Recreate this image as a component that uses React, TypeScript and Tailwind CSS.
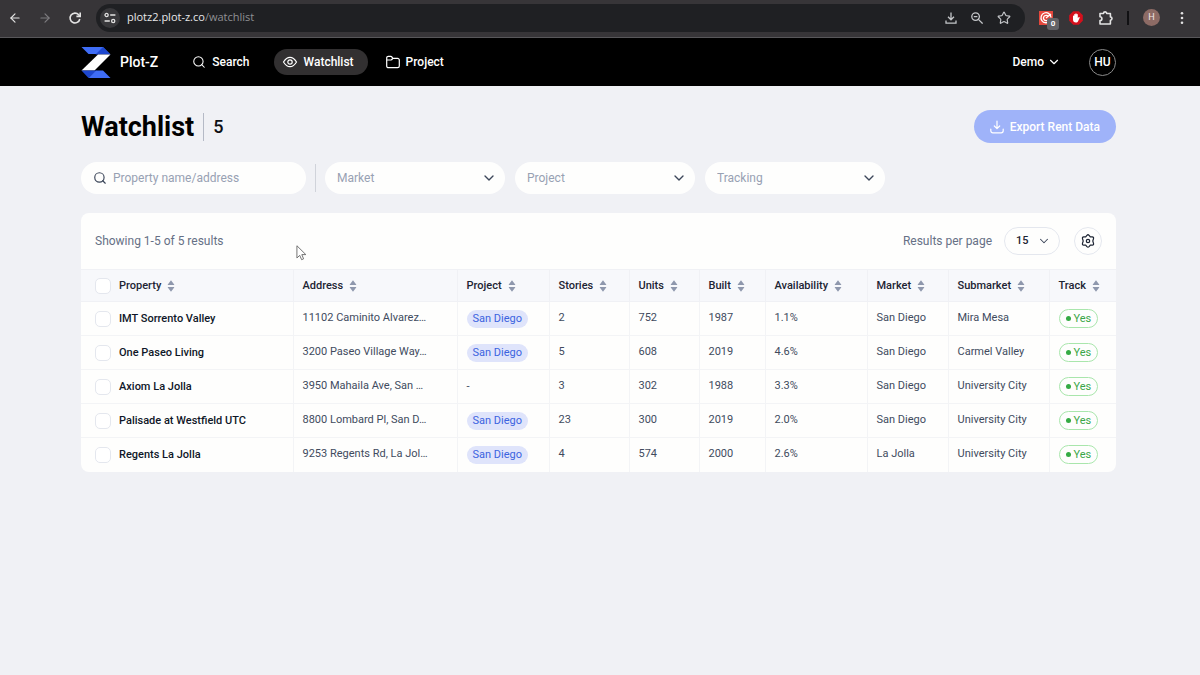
import React from 'react';
import { ArrowLeft, ArrowRight, ChevronDown, Search, Star } from 'lucide-react';

const columns = [
    { label: 'Property', width: '' },
    { label: 'Address', width: 'w-[164px]' },
    { label: 'Project', width: 'w-[92px]' },
    { label: 'Stories', width: 'w-[80px]' },
    { label: 'Units', width: 'w-[70px]' },
    { label: 'Built', width: 'w-[66px]' },
    { label: 'Availability', width: 'w-[102px]' },
    { label: 'Market', width: 'w-[81px]' },
    { label: 'Submarket', width: 'w-[101px]' },
    { label: 'Track', width: 'w-[67px]' },
];

const rows = [
    { name: 'IMT Sorrento Valley', address: '11102 Caminito Alvarez…', project: 'San Diego', stories: '2', units: '752', built: '1987', availability: '1.1%', market: 'San Diego', submarket: 'Mira Mesa' },
    { name: 'One Paseo Living', address: '3200 Paseo Village Way…', project: 'San Diego', stories: '5', units: '608', built: '2019', availability: '4.6%', market: 'San Diego', submarket: 'Carmel Valley' },
    { name: 'Axiom La Jolla', address: '3950 Mahaila Ave, San …', project: '', stories: '3', units: '302', built: '1988', availability: '3.3%', market: 'San Diego', submarket: 'University City' },
    { name: 'Palisade at Westfield UTC', address: '8800 Lombard Pl, San D…', project: 'San Diego', stories: '23', units: '300', built: '2019', availability: '2.0%', market: 'San Diego', submarket: 'University City' },
    { name: 'Regents La Jolla', address: '9253 Regents Rd, La Jol…', project: 'San Diego', stories: '4', units: '574', built: '2000', availability: '2.6%', market: 'La Jolla', submarket: 'University City' },
];

const SortIcon = () => (
    <svg className="w-2 h-3 shrink-0" viewBox="0 0 8 12" fill="#8f98ad">
        <path d="M4 0.3 7.2 4.4a.4.4 0 0 1-.3.7H1.1a.4.4 0 0 1-.3-.7z" />
        <path d="M4 11.7 7.2 7.6a.4.4 0 0 0-.3-.7H1.1a.4.4 0 0 0-.3.7z" />
    </svg>
);

const CheckBox = ({ label }: { label: string }) => (
    <input
        type="checkbox"
        aria-label={label}
        className="block appearance-none w-4 h-4 shrink-0 rounded-[5px] border border-[#e4e7ee] bg-white checked:bg-[#3b63f5]"
    />
);

const FilterSelect = ({ label }: { label: string }) => (
    <div className="relative w-[180px]">
        <select aria-label={label} className="appearance-none w-full h-8 rounded-full bg-[#fefefd] pl-3 pr-8 text-xs text-[#98a1b3]">
            <option>{label}</option>
        </select>
        <ChevronDown className="absolute right-2 top-2 w-4 h-4 text-[#3c4659] pointer-events-none" strokeWidth={2} />
    </div>
);

const BrowserBar = () => (
    <div className="flex items-center h-[38px] pr-4 bg-[#373538] border-b border-[#58575a] text-[#e3e3e3]">
        <div className="flex items-center gap-4 pl-2 pb-0.5">
            <button aria-label="Back"><ArrowLeft className="w-3.5 h-3.5" /></button>
            <button aria-label="Forward" className="text-[#7d7c7f]"><ArrowRight className="w-3.5 h-3.5" /></button>
            <button aria-label="Reload">
                <svg className="w-3.5 h-3.5" viewBox="0 0 14 14" fill="none" stroke="currentColor" strokeWidth="1.6">
                    <path d="M11.8 8A4.9 4.9 0 1 1 10.7 3.8L12 5.2" />
                    <path d="M12.2 1.6v3.8H8.4" />
                </svg>
            </button>
        </div>
        <div className="flex flex-1 items-center h-7 ml-3.5 mb-0.5 pl-1 pr-3.5 rounded-full bg-[#1f2023]">
            <button aria-label="Site information" className="flex items-center justify-center w-5 h-5 rounded-full bg-[#38383b]">
                <svg className="w-3 h-3" viewBox="0 0 12 12" fill="none" stroke="currentColor" strokeWidth="1.3">
                    <circle cx="2.6" cy="3" r="1.6" />
                    <path d="M6.2 3H11.4M.6 9h5.2" />
                    <circle cx="9.2" cy="9" r="1.6" />
                </svg>
            </button>
            <span className="ml-[7px] text-[11px] text-[#8f9094] font-['Open_Sans',sans-serif]">
                <span className="text-[#e8e8ea]">plotz2.plot-z.co</span>/watchlist
            </span>
            <div className="flex items-center gap-3.5 ml-auto text-[#c4c6c9]">
                <button aria-label="Downloads">
                    <svg className="w-3 h-3" viewBox="0 0 12 12" fill="none" stroke="currentColor" strokeWidth="1.3">
                        <path d="M6 .5v7M3 4.8l3 3 3-3M1 8.5v2.7h10V8.5" />
                    </svg>
                </button>
                <button aria-label="Zoom">
                    <svg className="w-3 h-3" viewBox="0 0 12 12" fill="none" stroke="currentColor" strokeWidth="1.3">
                        <circle cx="4.6" cy="4.6" r="3.8" />
                        <path d="M7.4 7.4l4.2 4.2M2.8 4.6h3.6" />
                    </svg>
                </button>
                <button aria-label="Bookmark"><Star className="w-3.5 h-3.5" /></button>
            </div>
        </div>
        <div className="flex items-center ml-3.5 pb-0.5">
            <button aria-label="Extension" className="relative w-4 h-4">
                <svg className="w-3.5 h-3.5" viewBox="0 0 14 14" fill="none">
                    <rect width="14" height="14" fill="#e5473c" />
                    <path d="M10.8 10A5 5 0 1 1 12 6.5M9 9a2.7 2.7 0 1 1 .6-3.2M7 7l5-4" stroke="#fff" strokeWidth="1.3" />
                </svg>
                <span className="absolute left-2 top-2 w-3 h-3 rounded-[3px] bg-[#636367] text-white text-[8px] leading-3 font-bold text-center">0</span>
            </button>
            <button aria-label="Ad blocker" className="ml-3.5">
                <svg className="w-3.5 h-3.5" viewBox="0 0 14 14">
                    <path d="M4.2.2h5.6l4 4v5.6l-4 4H4.2l-4-4V4.2z" fill="#d5101c" />
                    <path d="M4 8.500V5a.6.6 0 0 1 1.200 0V3.600a.6.6 0 0 1 1.200 0V2.900a.6.6 0 0 1 1.200 0v.7a.6.6 0 0 1 1.200 0v3.600l.8-.9c.5-.5 1.300 0 1 .6L9.200 10c-.5 1-1.200 1.500-2.300 1.500C5 11.500 4 10.200 4 8.500z" fill="#fff" />
                </svg>
            </button>
            <button aria-label="Extensions" className="ml-4">
                <svg className="w-3.5 h-3.5" viewBox="0 0 14 14" fill="none" stroke="currentColor" strokeWidth="1.6" strokeLinejoin="round">
                    <path d="M1 2.500h3.500a1.600 1.600 0 0 1 3.200 0H11.400V6a1.600 1.600 0 0 1 0 3.200v3.800H1V9.600a1.900 1.900 0 0 0 0-3.800z" />
                </svg>
            </button>
            <span className="w-0.5 h-3.5 ml-3.5 bg-[#111113]" />
            <button aria-label="Profile" className="w-[17px] h-[17px] ml-3.5 rounded-full bg-[#8d6b65] text-[9px] text-[#f1e7e5]">H</button>
            <button aria-label="Browser menu" className="ml-5">
                <svg className="w-1 h-3.5" viewBox="0 0 4 14" fill="currentColor">
                    <circle cx="2" cy="2.200" r="1.300" />
                    <circle cx="2" cy="7" r="1.300" />
                    <circle cx="2" cy="11.800" r="1.300" />
                </svg>
            </button>
        </div>
    </div>
);

const NavBar = () => (
    <header className="flex items-center h-12 pl-[81px] pr-[84px] bg-black text-white text-xs font-medium">
        <a href="#" className="flex items-center gap-[9px] text-sm">
            <svg className="w-[30px] h-[31px]" viewBox="0 0 30 31">
                <path d="M.5 0H22l7 7H7.500z" fill="#3f6df6" />
                <path d="M22 0l7.500 7.500H14.500z" fill="#1d47cf" />
                <path d="M17 7.500h12.500L13.500 23.500H.5z" fill="#fff" />
                <path d="M.5 23.500h15L7.500 31z" fill="#1d47cf" />
                <path d="M15 23.500h7L29.500 31h-22z" fill="#3f6df6" />
            </svg>
            <span>Plot-Z</span>
        </a>
        <nav className="flex items-center ml-6">
            <a href="#search" className="flex items-center gap-1.5 h-[26px] px-2.5">
                <Search className="w-3.5 h-3.5" strokeWidth={1.8} />Search
            </a>
            <a href="#watchlist" className="flex items-center gap-1.5 h-[26px] ml-3.5 pl-2 pr-3.5 rounded-full bg-[#323031]">
                <svg className="w-4 h-4" viewBox="0 0 16 16" fill="none" stroke="currentColor" strokeWidth="1.200">
                    <path d="M1.500 8C3.500 4.700 5.600 3.300 8 3.300S12.500 4.700 14.500 8C12.500 11.300 10.400 12.700 8 12.700S3.500 11.300 1.500 8z" />
                    <circle cx="8" cy="8" r="2.200" />
                </svg>
                Watchlist
            </a>
            <a href="#project" className="flex items-center gap-1.5 h-[26px] ml-2 px-2.5">
                <svg className="w-3.5 h-3.5" viewBox="0 0 14 14" fill="none" stroke="currentColor" strokeWidth="1.200" strokeLinejoin="round">
                    <path d="M.7 3a1.700 1.700 0 0 1 1.700-1.700h2.300c.6 0 1 .3 1.300.8l.8 1.300h4.800a1.700 1.700 0 0 1 1.700 1.700V11a1.700 1.700 0 0 1-1.700 1.700H2.400A1.700 1.700 0 0 1 .7 11z" />
                    <path d="M.7 5h4.100c.8 0 1.300-.5 1.900-1.600" />
                </svg>
                Project
            </a>
        </nav>
        <button className="flex items-center gap-[3px] ml-auto">
            Demo<ChevronDown className="w-3.5 h-3.5" />
        </button>
        <button className="w-[27px] h-[27px] ml-7 rounded-full border border-[#8b8b8b]">HU</button>
    </header>
);

const App = () => {
    return (
        <div className="min-h-screen bg-[#f0f1f5] font-[Roboto,sans-serif] text-[#0d0f14]">
            <BrowserBar />
            <NavBar />

            <main className="pl-[81px] pr-[84px] pt-6">
                <div className="flex items-center justify-between">
                    <div className="flex items-center">
                        <h1 className="text-[27px] leading-8 font-bold text-black">Watchlist</h1>
                        <span className="w-px h-7 mx-[9px] bg-[#b5bac6]" />
                        <span className="text-lg font-medium">5</span>
                    </div>
                    <button className="flex items-center gap-1.5 h-[33px] px-4 rounded-full bg-[#9fb3f9] text-xs font-medium text-white">
                        <svg className="w-3.5 h-3.5" viewBox="0 0 14 14" fill="none" stroke="currentColor" strokeWidth="1.200" strokeLinecap="round" strokeLinejoin="round">
                            <path d="M7 1v7.500M4.300 6 7 8.700 9.700 6M.8 9v1.800a2 2 0 0 0 2 2h8.400a2 2 0 0 0 2-2V9" />
                        </svg>
                        Export Rent Data
                    </button>
                </div>

                <div className="flex items-center mt-[19px]">
                    <div className="relative w-[225px]">
                        <Search className="absolute left-3 top-[9px] w-3.5 h-3.5 text-[#3c4659]" />
                        <input
                            type="text"
                            aria-label="Property name/address"
                            placeholder="Property name/address"
                            className="w-full h-8 rounded-full bg-[#fefefd] pl-8 pr-3 text-xs placeholder:text-[#98a1b3]"
                        />
                    </div>
                    <span className="w-px h-7 mx-[9px] bg-[#d0d3da]" />
                    <div className="flex gap-[10px]">
                        <FilterSelect label="Market" />
                        <FilterSelect label="Project" />
                        <FilterSelect label="Tracking" />
                    </div>
                </div>

                <section className="relative mt-[19px] rounded-lg bg-[#fefefd] overflow-hidden">
                    <div className="flex items-center h-14 px-3.5 text-xs text-[#667085]">
                        <span>Showing 1-5 of 5 results</span>
                        <label htmlFor="per-page" className="ml-auto">Results per page</label>
                        <div className="relative ml-3">
                            <select id="per-page" className="appearance-none w-14 h-7 pl-[11px] rounded-full border border-[#e4e7ee] text-[11px] font-medium text-[#1d2433]">
                                <option>15</option>
                            </select>
                            <ChevronDown className="absolute right-[9px] top-[7px] w-3.5 h-3.5 text-[#3c4659] pointer-events-none" strokeWidth={1.8} />
                        </div>
                        <button aria-label="Table settings" className="flex items-center justify-center w-7 h-7 ml-3.5 rounded-full border border-[#e4e7ee] text-[#1d2433]">
                            <svg className="w-3.5 h-3.5" viewBox="0 0 14 14" fill="none" stroke="currentColor" strokeWidth="1.200" strokeLinejoin="round">
                                <path d="M5.900 1.300Q7 .2 8.100 1.300L9.300 2.900 11.300 2.800Q12.900 3.100 12.500 4.600L11.800 7l.7 2.400q.4 1.500-1.200 1.800l-2-.1-1.200 1.600Q7 13.800 5.900 12.700L4.700 11.100l-2 .1Q1.100 10.900 1.500 9.400L2.200 7 1.500 4.600Q1.100 3.100 2.700 2.800l2 .1z" />
                                <circle cx="7" cy="7" r="1.700" />
                            </svg>
                        </button>
                    </div>

                    <table className="table-fixed w-full text-left text-[11px] leading-4">
                        <thead>
                            <tr className="h-8 bg-[#f7f8fb] border-y border-[#f0f1f5]">
                                {columns.map((col, i) => (
                                    <th key={col.label} className={`${col.width} pl-[9px] font-medium text-[#1d2433] border-r border-[#f0f1f5] last:border-r-0`}>
                                        <div className={i === 0 ? 'flex items-center gap-1.5 pl-[5px]' : 'flex items-center gap-1.5'}>
                                            {i === 0 && <span className="mr-0.5"><CheckBox label="Select all" /></span>}
                                            {col.label}
                                            <SortIcon />
                                        </div>
                                    </th>
                                ))}
                            </tr>
                        </thead>
                        <tbody className="text-[#414b5e]">
                            {rows.map((row) => (
                                <tr key={row.name} className="h-[34px] border-b border-[#f3f4f6] last:border-b-0 [&>td]:pl-[9px] [&>td]:border-r [&>td]:border-[#f3f4f6] [&>td:last-child]:border-r-0">
                                    <td className="font-medium text-[#0f1728]">
                                        <div className="flex items-center gap-2 pl-[5px]">
                                            <CheckBox label={row.name} />
                                            {row.name}
                                        </div>
                                    </td>
                                    <td className="pb-0.5">{row.address}</td>
                                    <td>
                                        {row.project ? (
                                            <span className="flex items-center w-fit h-[18px] px-1.5 rounded-full bg-[#dfe4fb] text-[#3b63e0]">{row.project}</span>
                                        ) : '-'}
                                    </td>
                                    <td className="pb-0.5">{row.stories}</td>
                                    <td className="pb-0.5">{row.units}</td>
                                    <td className="pb-0.5">{row.built}</td>
                                    <td className="pb-0.5">{row.availability}</td>
                                    <td className="pb-0.5">{row.market}</td>
                                    <td className="pb-0.5">{row.submarket}</td>
                                    <td>
                                        <span className="flex items-center w-fit gap-[3px] h-[19px] px-1.5 rounded-full border border-[#a9e6ac] text-[#3aa648]">
                                            <span className="w-[5px] h-[5px] rounded-full bg-[#35ab44]" />Yes
                                        </span>
                                    </td>
                                </tr>
                            ))}
                        </tbody>
                    </table>

                    {/* mouse pointer */}
                    <svg className="absolute left-[215px] top-8 w-3 h-4" viewBox="0 0 12 17" fill="#fff" stroke="#6b6b6b" strokeWidth="1" strokeLinejoin="round">
                        <path d="M.6.8v13l3-2.800 2 4.600 2.100-.9-1.900-4.500h4.300z" />
                    </svg>
                </section>
            </main>
        </div>
    );
};

export default App;
